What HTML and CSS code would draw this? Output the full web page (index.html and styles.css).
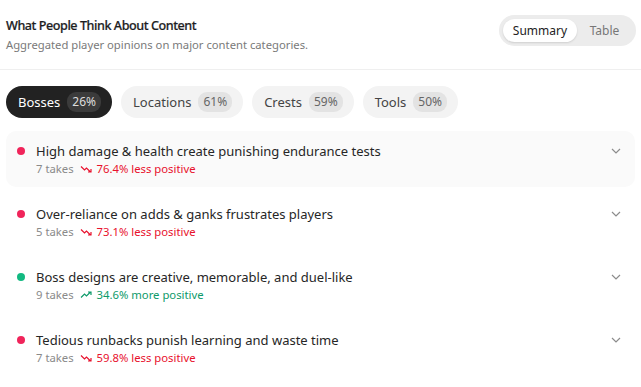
FILE: index.html
```html
<!DOCTYPE html>
<html lang="en">
<head>
    <meta charset="UTF-8">
    <meta name="viewport" content="width=device-width, initial-scale=1.0">
    <title>Content Opinions</title>
    <link rel="stylesheet" href="styles.css">
</head>
<body>
    <div class="panel">
        <div class="head">
            <div>
                <h1>What People Think About Content</h1>
                <p class="sub">Aggregated player opinions on major content categories.</p>
            </div>
            <div class="toggle">
                <button class="on">Summary</button>
                <button>Table</button>
            </div>
        </div>

        <div class="tabs">
            <button class="tab active">Bosses <span class="pct">26%</span></button>
            <button class="tab">Locations <span class="pct">61%</span></button>
            <button class="tab">Crests <span class="pct">59%</span></button>
            <button class="tab">Tools <span class="pct">50%</span></button>
        </div>

        <div class="list">
            <div class="item hover">
                <span class="dot neg"></span>
                <div class="body">
                    <div class="title">High damage &amp; health create punishing endurance tests</div>
                    <div class="meta">7 takes
                        <span class="trend neg">
                            <svg width="12" height="8" viewBox="0 0 12 8"><path d="M1 1.5l3.5 3.5 2-2 4 4M8 7h3V4" fill="none" stroke="currentColor" stroke-width="1.2"/></svg>
                            76.4% less positive
                        </span>
                    </div>
                </div>
                <svg class="chev" width="10" height="6" viewBox="0 0 10 6"><path d="M1 1l4 4 4-4" fill="none" stroke="currentColor" stroke-width="1.2"/></svg>
            </div>
            <div class="item">
                <span class="dot neg"></span>
                <div class="body">
                    <div class="title">Over-reliance on adds &amp; ganks frustrates players</div>
                    <div class="meta">5 takes
                        <span class="trend neg">
                            <svg width="12" height="8" viewBox="0 0 12 8"><path d="M1 1.5l3.5 3.5 2-2 4 4M8 7h3V4" fill="none" stroke="currentColor" stroke-width="1.2"/></svg>
                            73.1% less positive
                        </span>
                    </div>
                </div>
                <svg class="chev" width="10" height="6" viewBox="0 0 10 6"><path d="M1 1l4 4 4-4" fill="none" stroke="currentColor" stroke-width="1.2"/></svg>
            </div>
            <div class="item">
                <span class="dot pos"></span>
                <div class="body">
                    <div class="title">Boss designs are creative, memorable, and duel-like</div>
                    <div class="meta">9 takes
                        <span class="trend pos">
                            <svg width="12" height="8" viewBox="0 0 12 8"><path d="M1 6.5l3.5-3.5 2 2 4-4M8 1h3v3" fill="none" stroke="currentColor" stroke-width="1.2"/></svg>
                            34.6% more positive
                        </span>
                    </div>
                </div>
                <svg class="chev" width="10" height="6" viewBox="0 0 10 6"><path d="M1 1l4 4 4-4" fill="none" stroke="currentColor" stroke-width="1.2"/></svg>
            </div>
            <div class="item">
                <span class="dot neg"></span>
                <div class="body">
                    <div class="title">Tedious runbacks punish learning and waste time</div>
                    <div class="meta">7 takes
                        <span class="trend neg">
                            <svg width="12" height="8" viewBox="0 0 12 8"><path d="M1 1.5l3.5 3.5 2-2 4 4M8 7h3V4" fill="none" stroke="currentColor" stroke-width="1.2"/></svg>
                            59.8% less positive
                        </span>
                    </div>
                </div>
                <svg class="chev" width="10" height="6" viewBox="0 0 10 6"><path d="M1 1l4 4 4-4" fill="none" stroke="currentColor" stroke-width="1.2"/></svg>
            </div>
        </div>
    </div>
</body>
</html>
```

FILE: styles.css
```css
body {
    margin: 0;
    background-color: #fff;
    font-family: "Noto Sans", "Open Sans", sans-serif;
    color: #222;
}
.panel {
    width: 641px;
}
.head {
    display: flex;
    justify-content: space-between;
    align-items: flex-start;
    padding: 15px 5px 0 6px;
    height: 54px;
    border-bottom: 1px solid #efefef;
}
h1 {
    margin: 0;
    font-size: 12.6px;
    font-weight: 500;
    letter-spacing: -0.45px;
    line-height: 20px;
    margin-top: 1px;
    color: #1d1d1f;
    -webkit-text-stroke: 0.2px #1d1d1f;
}
.sub {
    margin: 1px 0 0;
    font-size: 11.25px;
    line-height: 16px;
    color: #7a7a7a;
}
.toggle {
    display: flex;
    background-color: #ececec;
    border-radius: 16px;
    padding: 4px;
}
.toggle button {
    border: none;
    background: none;
    font-family: inherit;
    font-size: 12px;
    line-height: 15px;
    padding: 4px 0;
    border-radius: 12px;
    color: #777;
    width: 55px;
}
.toggle button.on {
    background-color: #fff;
    color: #222;
    width: 74px;
    box-shadow: 0 1px 2px rgba(0, 0, 0, 0.12);
}
.tabs {
    display: flex;
    gap: 9px;
    padding: 16px 6px 0;
}
.tab {
    display: flex;
    align-items: center;
    gap: 7px;
    border: none;
    height: 32px;
    padding: 0 11px 0 12px;
    border-radius: 16px;
    background-color: #f3f3f3;
    color: #444;
    font-family: inherit;
    font-size: 13px;
}
.tab.active {
    background-color: #222;
    color: #fff;
}
.pct {
    font-size: 12px;
    line-height: 16px;
    padding: 2px 5px;
    border-radius: 9px;
    background-color: #e3e3e3;
    color: #666;
}
.tab.active .pct {
    background-color: #3b3b3b;
    color: #ddd;
}
.list {
    display: flex;
    flex-direction: column;
    gap: 7px;
    padding: 13px 6px 0;
}
.item {
    display: flex;
    align-items: flex-start;
    height: 56px;
    border-radius: 10px;
    padding: 0 14px 0 11px;
    box-sizing: border-box;
}
.item.hover {
    background-color: #fafafa;
}
.dot {
    width: 8px;
    height: 8px;
    border-radius: 50%;
    margin-top: 16px;
    margin-right: 11px;
    flex-shrink: 0;
}
.dot.neg {
    background-color: #f0245a;
}
.dot.pos {
    background-color: #12b981;
}
.body {
    flex: 1;
    padding-top: 11px;
}
.title {
    font-size: 13px;
    line-height: 18px;
    color: #262626;
}
.meta {
    font-size: 11.3px;
    line-height: 15px;
    margin-top: 1px;
    color: #8a8a8a;
}
.trend {
    margin-left: 3px;
}
.trend svg {
    vertical-align: 0;
    margin-right: 2px;
}
.trend.neg {
    color: #e8112d;
}
.trend.pos {
    color: #0e9a6a;
}
.chev {
    color: #8c8c8c;
    margin-top: 17px;
}
```
